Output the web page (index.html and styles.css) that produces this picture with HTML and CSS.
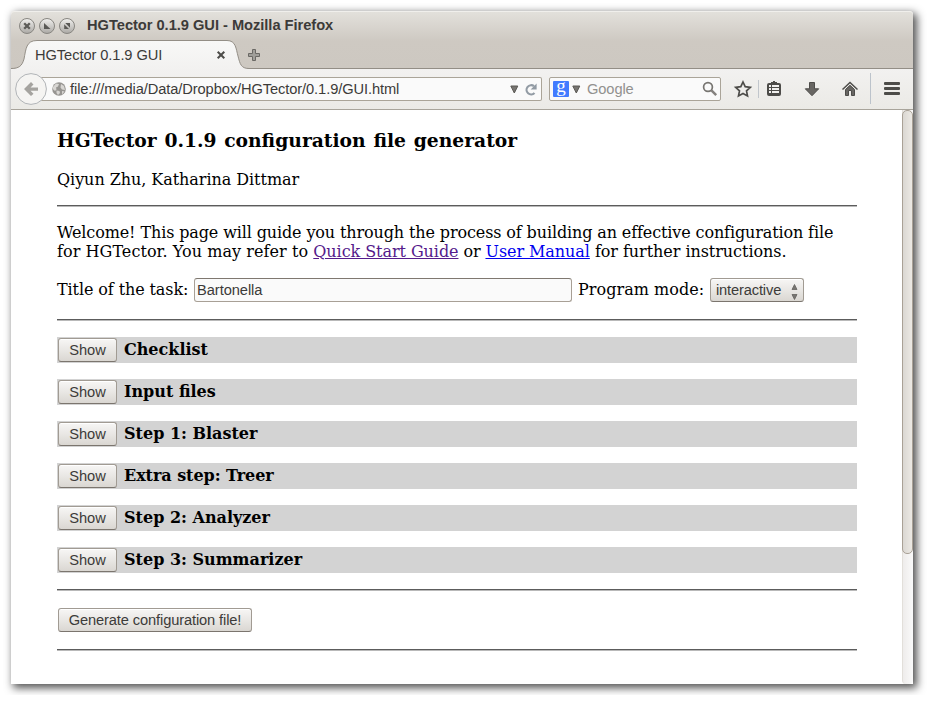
FILE: index.html
```html
<!DOCTYPE html>
<html lang="en">
<head>
<meta charset="utf-8">
<title>HGTector 0.1.9 GUI</title>
<link rel="stylesheet" href="styles.css">
</head>
<body>
<div class="window">
  <header class="titlebar">
    <svg class="controls" width="58" height="18" viewBox="0 0 58 18">
      <defs><linearGradient id="knob" x1="0" y1="0" x2="0" y2="1"><stop offset="0" stop-color="#f1f0ee"/><stop offset="1" stop-color="#aaa8a4"/></linearGradient></defs>
      <g fill="url(#knob)" stroke="#888681"><circle cx="9" cy="9" r="7.5"/><circle cx="29" cy="9" r="7.5"/><circle cx="49" cy="9" r="7.5"/></g>
      <path d="M6.2 6.2l5.6 5.6M11.800 6.200l-5.600 5.600" stroke="#5c5b58" stroke-width="2.300"/>
      <path d="M26 6v6h6.500zM46.200 12V7.200l4.800 4.800zM47.200 6h4.800v4.800z" fill="#5a5956"/>
    </svg>
    <span class="title">HGTector 0.1.9 GUI - Mozilla Firefox</span>
  </header>
  <div class="tabs">
    <div class="tab">
      <svg class="tab-shape" width="240" height="30" viewBox="0 0 240 30">
        <defs><linearGradient id="tabfill" x1="0" y1="0" x2="0" y2="1"><stop offset="0" stop-color="#f8f8f7"/><stop offset="1" stop-color="#f2f1f0"/></linearGradient></defs>
        <path d="M0 30V28.500C8 28.500 11 26 13 19C15 9 15 .500 26 .500H216C225 .500 225 9 227 16C229 24 230 28.500 238 28.500V30z" fill="url(#tabfill)"/>
        <path d="M0 28.500C8 28.500 11 26 13 19C15 9 15 .500 26 .500H216C225 .500 225 9 227 16C229 24 230 28.500 238 28.500" fill="none" stroke="#938e86"/>
      </svg>
      <span class="tab-label">HGTector 0.1.9 GUI</span>
      <svg class="tab-close" width="10" height="10" viewBox="0 0 10 10"><path d="M1.700 1.700l6.600 6.600M8.300 1.700l-6.600 6.600" stroke="#4d4c49" stroke-width="2"/></svg>
    </div>
    <svg class="tab-new" width="12" height="12" viewBox="0 0 12 12"><path d="M4.500.5h3v4h4v3h-4v4h-3v-4h-4v-3h4z" fill="#a09e99" stroke="#6a6864"/></svg>
  </div>
  <nav class="toolbar">
    <svg class="back" width="32" height="32" viewBox="0 0 32 32"><circle cx="16" cy="16" r="15.400" fill="#f5f4f2" stroke="#b1b4b7"/><path d="M9 16l7-7 2.500 2.500-3 3H23v3.200h-7.500l3 3L16 23z" fill="#a5a39f"/></svg>
    <div class="urlbar">
      <svg width="14" height="14" viewBox="0 0 14 14"><circle cx="7" cy="7" r="6.800" fill="#979592"/><path d="M1 5l3-3.500 3 .5-1 2.500-2 1 .5 2L3 9 .8 7zM9 2l3 2 1 4-3-.5-1.500-2zM4.500 8.500l3 .5.500 2-2 2-1.500-2zM10 9l2.500.5L10 12.500z" fill="#d8d6d3"/></svg>
      <span class="url">file:///media/Data/Dropbox/HGTector/0.1.9/GUI.html</span>
      <svg class="drop" width="9" height="9" viewBox="0 0 9 9"><path d="M.8 1h7L4.300 8z" fill="#777571" stroke="#5b5955"/></svg>
      <svg class="reload" width="12" height="13" viewBox="0 0 12 13"><path d="M9.500 10A4.600 4.600 0 1 1 9 3.200" fill="none" stroke="#929ba4" stroke-width="2.200"/><path d="M11.600.6v6H5.600z" fill="#929ba4"/></svg>
    </div>
    <div class="search">
      <span class="g-logo">g</span>
      <svg class="drop" width="9" height="9" viewBox="0 0 9 9"><path d="M.8 1h7L4.300 8z" fill="#777571" stroke="#5b5955"/></svg>
      <span class="hint">Google</span>
      <svg class="lens" width="16" height="16" viewBox="0 0 16 16"><circle cx="6" cy="6" r="4.400" fill="none" stroke="#777571" stroke-width="1.700"/><path d="M9.200 9.200l5 5" stroke="#85827e" stroke-width="2.500"/></svg>
    </div>
    <svg class="tools" width="192" height="40" viewBox="0 0 192 40">
      <path d="M22 13l2.200 4.700 5.100.6-3.800 3.500 1 5.100-4.500-2.500-4.500 2.500 1-5.100-3.800-3.500 5.100-.6z" fill="none" stroke="#4d4c49" stroke-width="1.700"/>
      <path d="M37.500 11v18" stroke="#c1c6cc"/>
      <path d="M46 16q0-2 2-2h2v-1h2v-1h2v1h2v1h2q2 0 2 2v9q0 2-2 2h-10q-2 0-2-2z" fill="#4d4c49"/>
      <path d="M48 16h2v2h-2zM48 19h2v2h-2zM48 22h2v2h-2zM51 16h7v2h-7zM51 19h7v2h-7zM51 22h7v2h-7z" fill="#f2f1ef"/>
      <path d="M88.500 13.500h5v6.300h4.200L91 26.700l-6.700-6.900h4.200z" fill="#686663" stroke="#4d4c49"/>
      <path d="M121.500 20.500l7.500-7 7.500 7" fill="none" stroke="#4d4c49" stroke-width="1.500"/><path d="M124.500 20.500l4.500-4.200 4.500 4.200v6h-3v-5h-3v5h-3z" fill="#686663" stroke="#4d4c49"/>
      <path d="M149.500 4v31" stroke="#bcc3cb"/>
      <g fill="#4d4c49"><rect x="163" y="13" width="16" height="3" rx="1"/><rect x="163" y="18" width="16" height="3" rx="1"/><rect x="163" y="23" width="16" height="3" rx="1"/></g>
    </svg>
  </nav>
  <div class="viewport">
    <main class="page">
      <h3>HGTector 0.1.9 configuration file generator</h3>
      <p class="authors">Qiyun Zhu, Katharina Dittmar</p>
      <hr>
      <p class="intro">Welcome! This page will guide you through the process of building an effective configuration file<br><span class="lead">for HGTector. You may refer to </span><a class="visited" href="#quick">Quick Start Guide</a> or <a href="#manual">User Manual</a><span class="tail"> for further instructions.</span></p>
      <div class="row form"><label for="task">Title of the task:</label><input id="task" type="text" value="Bartonella"><span class="mode">Program mode:</span><button class="btn select">interactive<svg width="7" height="18" viewBox="0 0 7 18"><path d="M1 6.500h5L3.500 1.500zM1 11.500h5L3.500 16.500z" fill="#777571" stroke="#65625e" stroke-width=".8"/></svg></button></div>
      <hr>
      <section class="row bar"><button class="btn">Show</button><b>Checklist</b></section>
      <section class="row bar"><button class="btn">Show</button><b>Input files</b></section>
      <section class="row bar"><button class="btn">Show</button><b>Step 1: Blaster</b></section>
      <section class="row bar"><button class="btn">Show</button><b class="treer">Extra step: Treer</b></section>
      <section class="row bar"><button class="btn">Show</button><b>Step 2: Analyzer</b></section>
      <section class="row bar"><button class="btn">Show</button><b>Step 3: Summarizer</b></section>
      <hr>
      <div class="row"><button class="btn generate">Generate configuration file!</button></div>
      <hr>
    </main>
    <div class="scrollbar"><div class="thumb"></div></div>
  </div>
</div>
</body>
</html>
```
FILE: styles.css
```css
* { box-sizing: border-box; }
body { margin: 0; padding: 11px; background: #fff; overflow: hidden; font: 16px/19px "DejaVu Serif", serif; color: #000; }
svg { display: block; flex: none; }
.window { width: 902px; height: 673px; display: flex; flex-direction: column; border-radius: 4px 4px 0 0; background: linear-gradient(#e3e1dc 0, #cec9c2 30px, #cdc8c1 58px, #fff 58px); box-shadow: 3px 3px 9px 1px rgba(0,0,0,.68); }
.titlebar, .tabs, .toolbar, .btn, input { font-family: "Liberation Sans", sans-serif; font-size: 14.667px; color: #3c3b39; }
.titlebar { height: 29px; border-top: 1px solid #f0efec; border-radius: 4px 4px 0 0; display: flex; align-items: center; padding: 0 7px 2px; }
.controls { margin-top: 1px; }
.title { margin-left: 11px; font-weight: bold; letter-spacing: -.03px; white-space: nowrap; }
.tabs { height: 29px; display: flex; align-items: center; border-bottom: 1px solid #938e86; }
.tab { position: relative; width: 238px; height: 29px; display: flex; align-items: center; padding: 2px 0 0 24px; }
.tab-shape { position: absolute; left: 0; top: 0; }
.tab-label { position: relative; width: 181px; letter-spacing: -.08px; white-space: nowrap; }
.tab-close { position: relative; }
.tab-new { margin: 2px 0 0 -1px; }
.toolbar { height: 41px; display: flex; align-items: center; padding-left: 4px; border-bottom: 1px solid #a8a49b; background: linear-gradient(#f2f1f0, #ebeae6); }
.back { position: relative; }
.urlbar, .search { height: 24px; display: flex; align-items: center; border: 1px solid #aaa498; border-radius: 2px; background: #fafafa; }
.urlbar { width: 511px; margin-left: -16px; padding-left: 21px; border-left: 0; }
.url { width: 440px; margin-left: 4px; letter-spacing: -.095px; white-space: nowrap; }
.reload { margin-left: 6px; }
.search { width: 172px; margin-left: 7px; padding-left: 3px; }
.g-logo { width: 16px; height: 16px; border-radius: 1px; background: #427bff; color: #fff; font: 19px/9px "Liberation Serif", serif; text-align: center; }
.search .drop { margin-left: 3px; }
.hint { width: 115px; margin-left: 6px; letter-spacing: -.1px; color: #92918f; }
.viewport { flex: 1; display: flex; justify-content: space-between; background: #fff; }
.page { width: 800px; margin-left: 46px; }
h3 { margin: 19px 0; font-size: 18.72px; line-height: 22px; word-spacing: 1.2px; white-space: nowrap; }
p { margin: 0 0 16px; white-space: nowrap; }
.authors { letter-spacing: -.05px; }
.intro { letter-spacing: -.12px; }
.lead { letter-spacing: .06px; }
.intro a { letter-spacing: -.065px; }
.tail { letter-spacing: -.05px; }
hr { height: 2px; margin: 16px 0; border: 0; border-top: 1px solid #5c5c5c; border-bottom: 1px solid #b9b9b9; }
a { color: #00e; }
a.visited { color: #551a8b; }
.row { height: 26px; margin: 16px 0; display: flex; align-items: center; white-space: nowrap; padding-left: 1px; }
.form { padding: 0; }
.bar { background: #d3d3d3; }
.bar b { margin-left: 7px; line-height: 26px; }
.treer { letter-spacing: -.06px; }
.btn { width: 59px; height: 24px; padding: 0; border: 1px solid #a19b93; border-bottom-color: #7b756e; border-radius: 3px; background: linear-gradient(#f7f6f5, #e9e7e4 50%, #dad7d2); box-shadow: inset 0 1px #fff; text-align: center; letter-spacing: -.07px; }
.generate { width: 194px; letter-spacing: -.12px; }
label, .mode { padding-bottom: 2px; }
label { width: 137px; letter-spacing: -.1px; }
input { width: 378px; height: 24px; padding: 0 2px; border: 1px solid #a8a096; border-top-color: #7f7870; border-radius: 3px; background: #fafafa; letter-spacing: -.06px; }
.mode { width: 132px; margin-left: 6px; letter-spacing: .04px; }
.select { width: 94px; display: flex; align-items: center; justify-content: space-between; padding: 0 5px; letter-spacing: -.15px; }
.select svg { margin-top: 3px; }
.scrollbar { width: 11px; border-left: 1px solid #e2dfda; border-radius: 0 0 4px 4px; background: linear-gradient(90deg, #eeeceb, #fafafa); }
.thumb { width: 11px; height: 444px; margin-left: -1px; border: 1px solid #a9a196; border-radius: 5px; background: linear-gradient(90deg, #dad7d2, #ece9e4); }
```
